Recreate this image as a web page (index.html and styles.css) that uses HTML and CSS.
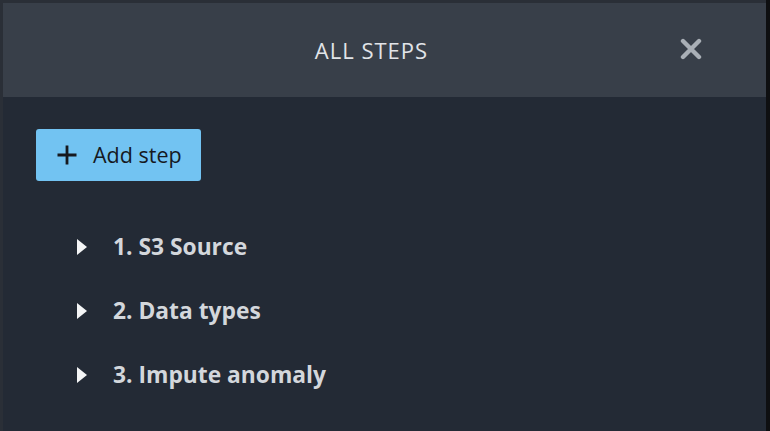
FILE: index.html
```html
<!DOCTYPE html>
<html>
<head>
<meta charset="utf-8">
<link rel="stylesheet" href="styles.css">
</head>
<body>
<div class="frame">
  <div class="panel">
    <header class="header">
      <h1 class="title">ALL STEPS</h1>
      <button class="close" aria-label="Close">
        <svg width="22" height="22" viewBox="0 0 22 22"><path d="M3 3 L19 19 M19 3 L3 19" stroke="#a9afb6" stroke-width="4.4" stroke-linecap="round" fill="none"/></svg>
      </button>
    </header>
    <main class="content">
      <button class="add-btn">
        <svg class="plus" width="22" height="22" viewBox="0 0 22 22"><path d="M11 1.5 V20.5 M1.5 11 H20.5" stroke="#16191f" stroke-width="2.8" fill="none"/></svg>
        <span class="add-label">Add step</span>
      </button>
      <ul class="steps">
        <li class="step"><span class="caret"></span><span class="label">1. S3 Source</span></li>
        <li class="step"><span class="caret"></span><span class="label">2. Data types</span></li>
        <li class="step"><span class="caret"></span><span class="label">3. Impute anomaly</span></li>
      </ul>
    </main>
  </div>
</div>
</body>
</html>
```

FILE: styles.css
```css
* { box-sizing: border-box; }
html, body { margin: 0; padding: 0; }
body {
  width: 770px;
  height: 431px;
  overflow: hidden;
  background: #0e0f11;
  font-family: "Open Sans", "Liberation Sans", Arial, sans-serif;
}
.frame {
  width: 770px;
  height: 431px;
  padding: 3px 0 0 3px;
  background: #2a2f37;
  border-right: 4px solid #0e0f11;
}
.panel {
  height: 100%;
  background: #232a35;
  display: flex;
  flex-direction: column;
}
.header {
  height: 94px;
  background: #383f49;
  display: flex;
  align-items: center;
  padding-left: 60px;
}
.title {
  flex: 1;
  margin: 0;
  text-align: center;
  font-weight: normal;
  font-size: 22px;
  letter-spacing: 1px;
  color: #e1e4e8;
}
.close {
  width: 22px;
  height: 22px;
  padding: 0;
  border: 0;
  background: none;
  margin-right: 64px;
  margin-top: -2px;
  display: flex;
}
.content {
  padding: 32px 0 0 33px;
}
.add-btn {
  width: 165px;
  height: 52px;
  border: 0;
  border-radius: 3px;
  background: #72c3f2;
  color: #16191f;
  display: flex;
  align-items: center;
  padding: 0 0 0 20px;
  gap: 15px;
  font-family: "Open Sans", "Liberation Sans", Arial, sans-serif;
  font-size: 21.5px;
}
.add-label { margin-top: -2px; }
.plus { margin-top: -1px; }
.steps {
  list-style: none;
  margin: 33px 0 0 0;
  padding: 0 0 0 41px;
}
.step {
  height: 64px;
  display: flex;
  align-items: center;
}
.caret {
  width: 0;
  height: 0;
  border-top: 8px solid transparent;
  border-bottom: 8px solid transparent;
  border-left: 10px solid #f4f5f6;
  margin-right: 26px;
  margin-top: 1px;
}
.label {
  font-weight: bold;
  font-size: 22.8px;
  color: #d3d7dc;
}
```
